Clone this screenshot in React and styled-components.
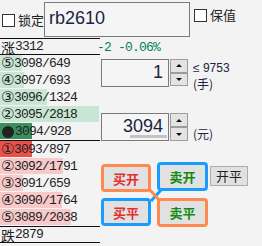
import React from 'react';
import styled, {createGlobalStyle} from "styled-components";

const Global = createGlobalStyle`
  html, body {
    margin: 0;
    padding: 0;
    background: #f3f3f3;
  }
`

const CJK = `"Noto Sans CJK SC", sans-serif`
const MONO = `"Liberation Mono", "Noto Sans CJK SC", monospace`

const Page = styled.div`
  width: 262px;
  height: 246px;
  overflow: hidden;
  background: #f3f3f3;
  color: #222;
  font-family: ${CJK};
`

const TopBar = styled.div`
  height: 38px;
  display: flex;
  align-items: center;
`

const Check = styled.span`
  box-sizing: border-box;
  display: inline-block;
  width: 13px;
  height: 13px;
  border: 1px solid #333;
  background: #fff;
  margin: ${p => p.$top ? '0 3px 0 0' : '0 3px 0 2px'};
`

const CheckLabel = styled.label`
  display: flex;
  align-items: center;
  font-size: 13px;
  line-height: 16px;
  align-self: ${p => p.$top ? 'flex-start' : 'center'};
  margin-top: ${p => p.$top ? '7px' : '2px'};
  margin-left: ${p => p.$top ? '4px' : '0'};
`

const CodeBox = styled.div`
  box-sizing: border-box;
  width: 146px;
  height: 35px;
  margin-left: 0;
  border: 1px solid #7a7a7a;
  background: #f5f5f5;
  font-family: "Liberation Sans", sans-serif;
  font-size: 18px;
  line-height: 31px;
  padding-left: 4px;
  color: #1c2340;
`

const Body = styled.div`
  display: flex;
`

const Book = styled.div`
  width: 100px;
  flex-shrink: 0;
  border-top: 1px solid #111;
`

const LimitRow = styled.div`
  height: 15px;
  border-bottom: 1px solid #111;
  padding-left: 1px;
  display: flex;
  align-items: flex-end;
`

const Han = styled.span`
  display: inline-block;
  font-size: 14px;
  line-height: 14px;
  height: 14px;
`

const Digits = styled.span`
  font-family: ${MONO};
  font-size: 13px;
  line-height: 15px;
  letter-spacing: -0.8px;
  position: relative;
`

const Side = styled.div`
  border-bottom: 1px solid #111;
`

const Level = styled.div`
  position: relative;
  height: 17px;
  padding-left: 1px;
  display: flex;
  align-items: center;
`

const Bar = styled.div`
  position: absolute;
  left: 0;
  top: 0;
  bottom: 1px;
  background: ${p => p.$color};
`

const Mark = styled.span`
  position: relative;
  font-family: "DejaVu Sans", ${CJK};
  font-size: 15px;
  line-height: 15px;
  height: 15px;
  width: 13px;
  text-align: center;
  color: #222;
`

const Dot = styled.span`
  position: relative;
  display: inline-block;
  width: 12px;
  height: 12px;
  border-radius: 50%;
  background: #222;
  margin: 0 1px 0 1px;
`

const Panel = styled.div`
  flex: 1;
  padding-left: 1px;
  display: flex;
  flex-direction: column;
`

const Change = styled.div`
  margin-left: -4px;
  margin-top: 2px;
  height: 16px;
  line-height: 16px;
  font-family: ${MONO};
  font-size: 13px;
  letter-spacing: -0.8px;
  color: #00805c;
  white-space: pre;
`

const SpinRow = styled.div`
  display: flex;
  align-items: ${p => p.$align};
  margin-top: ${p => p.$gap}px;
`

const NumBox = styled.div`
  box-sizing: border-box;
  width: 68px;
  height: ${p => p.$h}px;
  border: 1px solid #7a7a7a;
  background: #f5f5f5;
  font-family: "Liberation Sans", sans-serif;
  font-size: 18px;
  text-align: right;
  padding-right: 5px;
  line-height: ${p => p.$h - 4}px;
  color: #1c2340;
  position: relative;
`

const Select = styled.div`
  position: absolute;
  right: 1px;
  bottom: 2px;
  width: 37px;
  height: 3px;
  background: #c4c4c4;
`

const Spinner = styled.div`
  display: flex;
  flex-direction: column;
  margin-left: 1px;
  height: ${p => p.$h}px;
`

const SpinBtn = styled.div`
  box-sizing: border-box;
  flex: 1;
  width: 18px;
  border: 1px solid #9d9d9d;
  background: #e3e3e3;
  display: flex;
  align-items: center;
  justify-content: center;
  &::after {
    content: "";
    border-left: 3px solid transparent;
    border-right: 3px solid transparent;
    ${p => p.$down ? 'border-top: 3px solid #111;' : 'border-bottom: 3px solid #111;'}
  }
`

const Unit = styled.div`
  margin-left: 5px;
  display: flex;
  flex-direction: column;
  color: #1c2340;
`

const Limit = styled.div`
  font-family: "Liberation Sans", sans-serif;
  font-size: 12px;
  line-height: 12px;
  margin-top: 3px;
`

const UnitText = styled.div`
  font-size: 12px;
  line-height: 14px;
  margin-top: ${p => p.$gap || 0}px;
`

const Actions = styled.div`
  position: relative;
  margin-top: 23px;
  display: grid;
  grid-template-columns: 50px 51px 34px;
  grid-template-rows: 29px 29px;
  column-gap: 6px;
  row-gap: 6px;
  align-items: start;
`

const Btn = styled.div`
  box-sizing: border-box;
  height: ${p => p.$h || 28}px;
  border: 3px solid ${p => p.$ring};
  border-radius: 4px;
  background: #e1e1e1;
  display: flex;
  align-items: center;
  justify-content: center;
  font-size: 13px;
  font-weight: 700;
  color: ${p => p.$color};
  transform: translateY(${p => p.$lift || 0}px);
  position: relative;
  z-index: 1;
`

const PlainBtn = styled.div`
  box-sizing: border-box;
  height: 20px;
  margin-left: -4px;
  margin-top: 2px;
  border: 1px solid #adadad;
  background: #e1e1e1;
  font-size: 13px;
  line-height: 18px;
  text-align: center;
  color: #222;
`

const Links = styled.svg`
  position: absolute;
  left: 0;
  top: 0;
  pointer-events: none;
  z-index: 2;
`

const asks = [
    {n: '⑤', p: '3098/649', w: 22},
    {n: '④', p: '3097/693', w: 24},
    {n: '③', p: '3096/1324', w: 47},
    {n: '②', p: '3095/2818', w: 99},
]

const bids = [
    {n: '②', p: '3092/1791', w: 63},
    {n: '③', p: '3091/659', w: 23},
    {n: '④', p: '3090/1764', w: 62},
    {n: '⑤', p: '3089/2038', w: 71},
]

export default function App() {
    return (
        <Page>
            <Global/>
            <TopBar>
                <CheckLabel><Check/>锁定</CheckLabel>
                <CodeBox>rb2610</CodeBox>
                <CheckLabel $top><Check $top/>保值</CheckLabel>
            </TopBar>
            <Body>
                <Book>
                    <LimitRow><Han>涨</Han><Digits>3312</Digits></LimitRow>
                    <Side>
                        {asks.map(a => (
                            <Level key={a.p}>
                                <Bar $color="#c8e6d3" style={{width: a.w}}/>
                                <Mark>{a.n}</Mark><Digits>{a.p}</Digits>
                            </Level>
                        ))}
                        <Level>
                            <Bar $color="#3a8f5e" style={{width: 32}}/>
                            <Dot/><Digits>3094/928</Digits>
                        </Level>
                    </Side>
                    <Side>
                        <Level>
                            <Bar $color="#e8524a" style={{width: 32}}/>
                            <Mark>①</Mark><Digits>3093/897</Digits>
                        </Level>
                        {bids.map(b => (
                            <Level key={b.p}>
                                <Bar $color="#f8c9c9" style={{width: b.w}}/>
                                <Mark>{b.n}</Mark><Digits>{b.p}</Digits>
                            </Level>
                        ))}
                    </Side>
                    <LimitRow><Han>跌</Han><Digits>2879</Digits></LimitRow>
                </Book>
                <Panel>
                    <Change>-2 -0.06%</Change>
                    <SpinRow $align="flex-start" $gap={3}>
                        <NumBox $h={28}>1</NumBox>
                        <Spinner $h={27}>
                            <SpinBtn/>
                            <SpinBtn $down/>
                        </Spinner>
                        <Unit>
                            <Limit>≤ 9753</Limit>
                            <UnitText $gap={3}>(手)</UnitText>
                        </Unit>
                    </SpinRow>
                    <SpinRow $align="flex-end" $gap={22}>
                        <NumBox $h={28}>3094<Select/></NumBox>
                        <Spinner $h={28}>
                            <SpinBtn/>
                            <SpinBtn $down/>
                        </Spinner>
                        <Unit>
                            <UnitText>(元)</UnitText>
                        </Unit>
                    </SpinRow>
                    <Actions>
                        <Btn $ring="#ff8a50" $color="#e03030">买开</Btn>
                        <Btn $ring="#1a9cff" $color="#138a13" $lift={-2} $h={29}>卖开</Btn>
                        <PlainBtn>开平</PlainBtn>
                        <Btn $ring="#1a9cff" $color="#e03030" $lift={-1}>买平</Btn>
                        <Btn $ring="#ff8a50" $color="#138a13" $lift={-1} $h={29}>卖平</Btn>
                        <Links width="110" height="60">
                            <line x1="60" y1="26" x2="50" y2="37" stroke="#1a9cff" strokeWidth="3"/>
                            <line x1="49" y1="26" x2="58" y2="36" stroke="#ff8a50" strokeWidth="3"/>
                        </Links>
                    </Actions>
                </Panel>
            </Body>
        </Page>
    );
}
